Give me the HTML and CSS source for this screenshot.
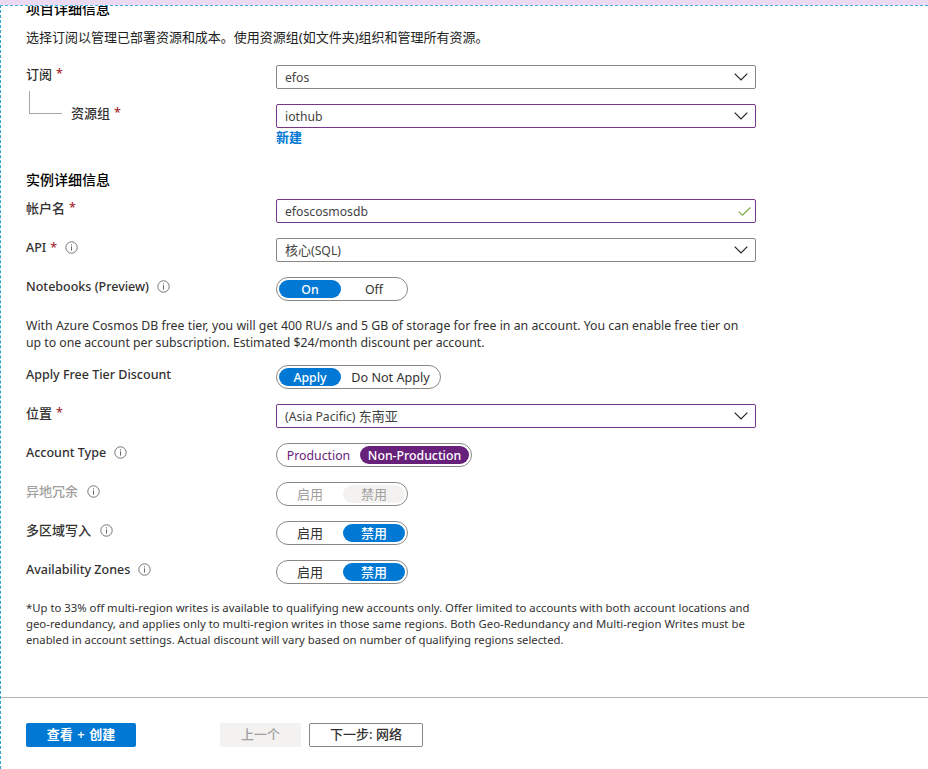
FILE: index.html
```html
<!DOCTYPE html>
<html lang="zh-CN">
<head>
<meta charset="utf-8">
<title>Azure Cosmos DB</title>
<link rel="stylesheet" href="styles.css">
</head>
<body>
<svg class="sprite" aria-hidden="true">
  <symbol id="chevron" viewBox="0 0 14 8"><path d="M.7.7 7 7 13.3.7" fill="none" stroke="#222" stroke-width="1.2"/></symbol>
  <symbol id="check" viewBox="0 0 13 9"><path d="M.6 4.6 4.5 8.2 12.4.5" fill="none" stroke="#7fab3a" stroke-width="1.1"/></symbol>
  <symbol id="info" viewBox="0 0 13 13"><circle cx="6.5" cy="6.5" r="5.7" fill="none" stroke="#666" stroke-width=".9"/><path d="M6.5 5.4v4.2M6.5 3.3v1.1" stroke="#666" stroke-width="1"/></symbol>
</svg>
<div class="frame">
  <main class="form">
    <h2 class="heading first">项目详细信息</h2>
    <p class="intro">选择订阅以管理已部署资源和成本。使用资源组(如文件夹)组织和管理所有资源。</p>

    <div class="row">
      <div class="label zh">订阅<b class="req">*</b></div>
      <div class="field"><span>efos</span><svg class="chevron"><use href="#chevron"/></svg></div>
    </div>
    <div class="row">
      <div class="label zh nested"><i class="branch"></i>资源组<b class="req">*</b></div>
      <div class="field edited"><span>iothub</span><svg class="chevron"><use href="#chevron"/></svg></div>
    </div>
    <a class="new">新建</a>

    <h2 class="heading">实例详细信息</h2>
    <div class="row">
      <div class="label zh">帐户名<b class="req">*</b></div>
      <div class="field edited"><span>efoscosmosdb</span><svg class="check"><use href="#check"/></svg></div>
    </div>
    <div class="row">
      <div class="label en">API<b class="req">*</b><svg class="info"><use href="#info"/></svg></div>
      <div class="field"><span><span class="zh">核心</span>(SQL)</span><svg class="chevron"><use href="#chevron"/></svg></div>
    </div>
    <div class="row">
      <div class="label en">Notebooks (Preview)<svg class="info"><use href="#info"/></svg></div>
      <div class="toggle en"><span class="opt on">On</span><span class="opt">Off</span></div>
    </div>
    <p class="tier">With Azure Cosmos DB free tier, you will get 400 RU/s and 5 GB of storage for free in an account. You can enable free tier on<br><span class="tight">up to one account per subscription. Estimated $24/month discount per account.</span></p>
    <div class="row">
      <div class="label en">Apply Free Tier Discount</div>
      <div class="toggle en"><span class="opt on">Apply</span><span class="opt fit">Do Not Apply</span></div>
    </div>
    <div class="row">
      <div class="label zh">位置<b class="req">*</b></div>
      <div class="field edited"><span>(Asia Pacific) <span class="zh">东南亚</span></span><svg class="chevron"><use href="#chevron"/></svg></div>
    </div>
    <div class="row">
      <div class="label en">Account Type<svg class="info"><use href="#info"/></svg></div>
      <div class="toggle en purple"><span class="opt prod">Production</span><span class="opt on nonprod">Non-Production</span></div>
    </div>
    <div class="row disabled">
      <div class="label zh">异地冗余<svg class="info"><use href="#info"/></svg></div>
      <div class="toggle zh"><span class="opt">启用</span><span class="opt on">禁用</span></div>
    </div>
    <div class="row">
      <div class="label zh">多区域写入<svg class="info"><use href="#info"/></svg></div>
      <div class="toggle zh"><span class="opt">启用</span><span class="opt on">禁用</span></div>
    </div>
    <div class="row">
      <div class="label en">Availability Zones<svg class="info"><use href="#info"/></svg></div>
      <div class="toggle zh"><span class="opt">启用</span><span class="opt on">禁用</span></div>
    </div>
    <p class="note">*Up to 33% off multi-region writes is available to qualifying new accounts only. Offer limited to accounts with both account locations and<br><span class="wide">geo-redundancy, and applies only to multi-region writes in those same regions. Both Geo-Redundancy and Multi-region Writes must be</span><br><span class="narrow">enabled in account settings. Actual discount will vary based on number of qualifying regions selected.</span></p>
  </main>
  <footer class="footer">
    <button class="btn primary">查看 + 创建</button>
    <button class="btn prev">上一个</button>
    <button class="btn next">下一步: 网络</button>
  </footer>
</div>
</body>
</html>
```
FILE: styles.css
```css
* { box-sizing: border-box; }
body {
  margin: 0;
  height: 769px;
  overflow: hidden;
  padding-top: 5px;
  background: #ecdaf3;
  color: #323130;
  font: 13px/17px "Noto Sans", "Noto Sans CJK SC", sans-serif;
}
.sprite { display: none; }
.frame {
  display: flex;
  flex-direction: column;
  height: 764px;
  overflow: hidden;
  background: #fff;
  border-top: 1px dashed #45b0e2;
  border-left: 1px dashed #2fa3cc;
}
.form { height: 691px; padding-left: 25px; overflow: hidden; }
.heading {
  margin: 27px 0 12px;
  font-size: 14px;
  line-height: 14px;
  font-weight: 500;
  color: #000;
}
.heading.first { margin: -4px 0 13px; }
.intro { margin: 0 0 19px; line-height: 17px; white-space: nowrap; color: #222; letter-spacing: -.01px; }
.row { display: grid; grid-template-columns: 250px 480px; height: 24px; margin-bottom: 15px; }
.label { display: flex; height: 18px; line-height: 18px; align-items: center; font-weight: 500; font-size: 12.5px; white-space: nowrap; }
.label.en { height: 20px; line-height: 20px; }
.label.en .info { margin-top: -1px; margin-left: 8px; }
.nested { padding-left: 45px; position: relative; }
.branch { position: absolute; left: 3px; top: -13px; width: 33px; height: 23px; border: solid #a6a6a6; border-width: 0 0 1px 1px; }
.req { color: #a4262c; font-weight: 500; font-size: 12.5px; margin-left: 4px; }
.info { width: 13px; height: 13px; margin-left: 8.5px; }
.field { display: flex; align-items: center; justify-content: space-between; height: 24px; padding: 0 7.5px 0 8px; border: 1px solid #8a8886; border-radius: 2px; font-size: 12.2px; color: #444; }
.edited { border-color: #77378c; }
.chevron { width: 14px; height: 8px; }
.check { width: 13px; height: 9px; margin-right: -3px; }
.new { display: block; height: 17px; margin: -14px 0 0 250px; color: #0078d4; font-weight: 600; }
.toggle { display: flex; gap: 2px; width: max-content; height: 24px; padding: 2px; border: 1px solid #8a8886; border-radius: 12px; font-size: 12.3px; line-height: 18px; color: #323130; }
.toggle.en { line-height: 20px; }
.zh { font-size: 13px; }
.opt { width: 62px; height: 18px; border-radius: 9px; text-align: center; white-space: nowrap; }
.on { background: #0078d4; color: #fff; font-weight: 500; }
.fit { width: 95px; font-size: 12.6px; }
.purple { color: #68217a; }
.purple .on { background: #68217a; color: #fff; }
.prod { width: 79px; }
.nonprod { width: 109px; }
.disabled .label, .disabled .toggle { color: #a19f9d; }
.disabled .on { background: #f3f2f1; color: #a19f9d; font-weight: 400; }
.tier { margin: 16px 0 14px; font-size: 12.3px; line-height: 17px; white-space: nowrap; letter-spacing: .008px; }
.tight { letter-spacing: -.035px; }
.note { margin: 16px 0 0; font-size: 11.32px; line-height: 16px; white-space: nowrap; }
.wide { letter-spacing: .015px; }
.narrow { letter-spacing: -.015px; }
.footer { display: flex; height: 72px; border-top: 1px solid #b3b3b3; padding: 25px 0 0 25px; }
.btn { height: 24px; padding: 0 0 2px; border: 0; border-radius: 2px; font: 500 13px/20px "Noto Sans", "Noto Sans CJK SC", sans-serif; }
.primary { width: 110px; background: #0078d4; color: #fff; font-weight: 600; word-spacing: 1.2px; }
.prev { width: 81px; margin-left: 84px; background: #f3f2f1; color: #a19f9d; }
.next { width: 114px; margin-left: 8px; background: #fff; border: 1px solid #8a8886; color: #323130; }
```
